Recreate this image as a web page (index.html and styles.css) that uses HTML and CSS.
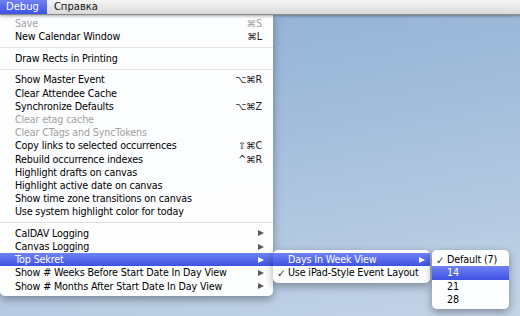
FILE: index.html
```html
<!DOCTYPE html>
<html lang="ru">
<head>
    <meta charset="UTF-8">
    <link rel="stylesheet" href="styles.css">
</head>
<body>
    <div class="menuBar">
        <div class="barTitle active">Debug</div>
        <div class="barTitle">Справка</div>
    </div>

    <div class="menu mainMenu">
        <div class="item disabled"><span class="label">Save</span><span class="keys">⌘S</span></div>
        <div class="item"><span class="label">New Calendar Window</span><span class="keys">⌘L</span></div>
        <div class="sep"></div>
        <div class="item"><span class="label">Draw Rects in Printing</span></div>
        <div class="sep"></div>
        <div class="item"><span class="label">Show Master Event</span><span class="keys">⌥⌘R</span></div>
        <div class="item"><span class="label">Clear Attendee Cache</span></div>
        <div class="item"><span class="label">Synchronize Defaults</span><span class="keys">⌥⌘Z</span></div>
        <div class="item disabled"><span class="label">Clear etag cache</span></div>
        <div class="item disabled"><span class="label">Clear CTags and SyncTokens</span></div>
        <div class="item"><span class="label">Copy links to selected occurrences</span><span class="keys">⇧⌘C</span></div>
        <div class="item"><span class="label">Rebuild occurrence indexes</span><span class="keys">^⌘R</span></div>
        <div class="item"><span class="label">Highlight drafts on canvas</span></div>
        <div class="item"><span class="label">Highlight active date on canvas</span></div>
        <div class="item"><span class="label">Show time zone transitions on canvas</span></div>
        <div class="item"><span class="label">Use system highlight color for today</span></div>
        <div class="sep"></div>
        <div class="item"><span class="label">CalDAV Logging</span><span class="arrow"></span></div>
        <div class="item"><span class="label">Canvas Logging</span><span class="arrow"></span></div>
        <div class="item selected hasSub">
            <span class="label">Top Sekret</span><span class="arrow"></span>
            <div class="menu subMenu weekMenu">
                <div class="item selected hasSub">
                    <span class="label">Days In Week View</span><span class="arrow"></span>
                    <div class="menu subMenu daysMenu">
                        <div class="item checked"><span class="check">✓</span><span class="label">Default (7)</span></div>
                        <div class="item selected"><span class="label">14</span></div>
                        <div class="item"><span class="label">21</span></div>
                        <div class="item"><span class="label">28</span></div>
                    </div>
                </div>
                <div class="item checked"><span class="check">✓</span><span class="label">Use iPad-Style Event Layout</span></div>
            </div>
        </div>
        <div class="item"><span class="label">Show # Weeks Before Start Date In Day View</span><span class="arrow"></span></div>
        <div class="item"><span class="label">Show # Months After Start Date In Day View</span><span class="arrow"></span></div>
    </div>
</body>
</html>
```

FILE: styles.css
```css
body {
    margin: 0;
    width: 520px;
    height: 316px;
    overflow: hidden;
    font-family: "DejaVu Sans", "Noto Sans", sans-serif;
    font-size: 9.6px;
    letter-spacing: -0.15px;
    color: #000;
    background: linear-gradient(170deg, #8eaed4 0%, #a3bedc 45%, #c4d4e7 100%);
}

.menuBar {
    display: flex;
    height: 14px;
    background: linear-gradient(#f6f6f6, #d9d9d9);
    border-bottom: 1px solid #8a8a8a;
    box-shadow: 0 1px 3px rgba(0, 0, 0, 0.35);
    position: relative;
    z-index: 3;
}
.barTitle {
    padding: 0 7px;
    line-height: 14px;
    font-size: 10px;
    letter-spacing: 0;
    color: #111;
}
.barTitle.active {
    padding: 0 8px 0 6px;
    color: #fff;
    background: linear-gradient(#6f82f4, #3e52e4);
}

.menu {
    background-color: rgba(255, 255, 255, 0.97);
    padding: 3px 0;
    box-shadow: 0 3px 9px rgba(0, 0, 0, 0.35);
}
.mainMenu {
    width: 273px;
    margin-top: -1px;
    border-radius: 0 0 5px 5px;
    position: relative;
    z-index: 2;
}
.subMenu {
    position: absolute;
    top: -3px;
    left: 100%;
    border-radius: 5px;
    color: #000;
}
.weekMenu {
    width: 157px;
}
.weekMenu .arrow {
    margin-right: -6px;
}
.daysMenu {
    left: calc(100% + 2px);
    width: 77px;
}

.item {
    display: flex;
    align-items: center;
    height: 13.2px;
    padding: 0 11px 0 15px;
    white-space: nowrap;
    position: relative;
}
.item .label {
    flex: 1;
}
.item .keys {
    color: #222;
}
.item.disabled,
.item.disabled .keys {
    color: #a2a2a2;
}
.item.selected {
    color: #fff;
    background: linear-gradient(#6f82f4, #3e52e4);
}
.item .check {
    position: absolute;
    left: 4px;
    font-size: 10.5px;
    color: #333;
}

.arrow {
    width: 0;
    height: 0;
    margin-right: -2px;
    border-top: 3.5px solid transparent;
    border-bottom: 3.5px solid transparent;
    border-left: 6px solid #5a5a5a;
}
.item.selected > .arrow {
    border-left-color: #fff;
}

.sep {
    height: 8.4px;
    display: flex;
    align-items: center;
}
.sep::after {
    content: '';
    flex: 1;
    height: 1px;
    background-color: #e2e2e2;
}
```
